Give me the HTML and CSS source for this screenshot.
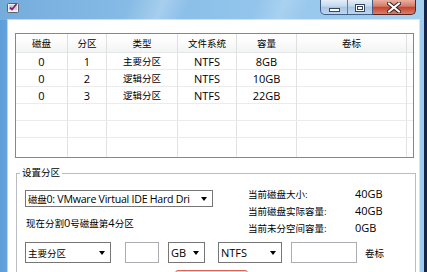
FILE: index.html
```html
<!DOCTYPE html>
<html>
<head>
<meta charset="utf-8">
<link rel="stylesheet" href="styles.css">
</head>
<body>
<div class="window">
  <div class="titlebar">
    <svg class="app-icon" width="12" height="12" viewBox="0 0 12 12">
      <rect x="0.5" y="1.5" width="11" height="9" rx="1" fill="#eef2f6" stroke="#5a6470"/>
      <rect x="2" y="3" width="8" height="5" fill="#c9d3dc"/>
      <path d="M3 5.5 L5 7.5 L9.5 2" fill="none" stroke="#8a1f6a" stroke-width="1.8"/>
    </svg>
    <div class="caption">
      <div class="cap-group">
        <div class="cap-btn cap-min"><span class="glyph-min"></span></div>
        <div class="cap-btn cap-max"><span class="glyph-max"></span></div>
      </div>
      <div class="cap-btn cap-close">
        <svg width="14" height="11" viewBox="0 0 14 11">
          <path d="M2 1.5 L12 9.5 M12 1.5 L2 9.5" stroke="#3a2020" stroke-width="4" stroke-linecap="square"/>
          <path d="M2 1.5 L12 9.5 M12 1.5 L2 9.5" stroke="#ffffff" stroke-width="2" stroke-linecap="square"/>
        </svg>
      </div>
    </div>
  </div>
  <div class="client">
    <div class="listview">
      <div class="lv-row lv-head">
        <div class="c cn">磁盘</div>
        <div class="c cn">分区</div>
        <div class="c cn">类型</div>
        <div class="c cn">文件系统</div>
        <div class="c cn">容量</div>
        <div class="c cn">卷标</div>
        <div class="c"></div>
      </div>
      <div class="lv-row">
        <div class="c">0</div><div class="c">1</div><div class="c cn">主要分区</div><div class="c">NTFS</div><div class="c">8GB</div><div class="c"></div><div class="c"></div>
      </div>
      <div class="lv-row">
        <div class="c">0</div><div class="c">2</div><div class="c cn">逻辑分区</div><div class="c">NTFS</div><div class="c">10GB</div><div class="c"></div><div class="c"></div>
      </div>
      <div class="lv-row">
        <div class="c">0</div><div class="c">3</div><div class="c cn">逻辑分区</div><div class="c">NTFS</div><div class="c">22GB</div><div class="c"></div><div class="c"></div>
      </div>
      <div class="lv-row">
        <div class="c"></div><div class="c"></div><div class="c"></div><div class="c"></div><div class="c"></div><div class="c"></div><div class="c"></div>
      </div>
      <div class="lv-row">
        <div class="c"></div><div class="c"></div><div class="c"></div><div class="c"></div><div class="c"></div><div class="c"></div><div class="c"></div>
      </div>
      <div class="lv-row lv-fill">
        <div class="c"></div><div class="c"></div><div class="c"></div><div class="c"></div><div class="c"></div><div class="c"></div><div class="c"></div>
      </div>
    </div>

    <fieldset class="group">
      <legend class="cn">设置分区</legend>
      <div class="group-body">
        <div class="group-top">
          <div class="left-col">
            <div class="combo combo-disk"><span class="val"><span class="cn">磁盘</span>0: VMware Virtual IDE Hard Dri</span><span class="arrow"></span></div>
            <div class="status"><span class="cn">现在分割</span>0<span class="cn">号磁盘第</span>4<span class="cn">分区</span></div>
          </div>
          <div class="info">
            <div class="lbl cn">当前磁盘大小:</div><div class="num">40GB</div>
            <div class="lbl cn">当前磁盘实际容量:</div><div class="num">40GB</div>
            <div class="lbl cn">当前未分空间容量:</div><div class="num">0GB</div>
          </div>
        </div>
        <div class="group-row">
          <div class="combo combo-type"><span class="val cn">主要分区</span><span class="arrow"></span></div>
          <div class="textbox tb-size"></div>
          <div class="combo combo-unit"><span class="val">GB</span><span class="arrow"></span></div>
          <div class="combo combo-fs"><span class="val">NTFS</span><span class="arrow"></span></div>
          <div class="textbox tb-label"></div>
          <div class="row-label cn">卷标</div>
        </div>
        <div class="actions">
          <div class="btn"></div>
        </div>
      </div>
    </fieldset>
  </div>
</div>
</body>
</html>
```

FILE: styles.css
```css
* { box-sizing: border-box; }

html, body {
  margin: 0;
  padding: 0;
}

body {
  width: 427px;
  height: 272px;
  overflow: hidden;
  background: #16264a;
  font-family: "Open Sans", "Noto Sans CJK SC", sans-serif;
  font-size: 11px;
  color: #000;
}

.cn { font-size: 9.5px; }

.window {
  width: 424px;
  height: 272px;
  display: flex;
  flex-direction: column;
  background: linear-gradient(90deg, #5d9ed9 0%, #6aa7de 3%, #7eb6e4 40%, #8fc2ea 80%, #a2cdee 100%);
}

.titlebar {
  height: 20px;
  display: flex;
  align-items: flex-start;
  justify-content: space-between;
  padding: 0 8px 0 7px;
  background:
    linear-gradient(112deg, rgba(255,255,255,0) 30%, rgba(255,255,255,0.25) 38%, rgba(255,255,255,0) 44%, rgba(255,255,255,0) 60%, rgba(255,255,255,0.18) 66%, rgba(255,255,255,0) 72%),
    linear-gradient(90deg, #74acdc 0%, #86bbe6 30%, #93c5ec 60%, #a6d0f0 100%);
}

.app-icon {
  margin-top: 2px;
  display: block;
}

.caption {
  display: flex;
  height: 15px;
}

.cap-group {
  display: flex;
  border: 1px solid #3f5f86;
  border-top: none;
  border-radius: 0 0 0 5px;
  overflow: hidden;
  background: linear-gradient(180deg, #e4eef8 0%, #c3d8ee 45%, #a9c5e4 50%, #bcd6ef 100%);
}

.cap-btn {
  height: 15px;
  display: flex;
  align-items: center;
  justify-content: center;
}

.cap-min {
  width: 27px;
  border-right: 1px solid #5e7ea6;
}

.cap-max {
  width: 24px;
}

.glyph-min {
  display: block;
  width: 11px;
  height: 4px;
  margin-top: 5px;
  background: #fff;
  border: 1px solid #34465e;
}

.glyph-max {
  display: block;
  width: 10px;
  height: 8px;
  border: 1px solid #34465e;
  background: #fff;
  box-shadow: inset 0 0 0 1px #fff, inset 0 0 0 2px #34465e;
}

.cap-close {
  width: 43px;
  border: 1px solid #5a2320;
  border-top: none;
  border-left: none;
  border-radius: 0 0 5px 0;
  background: linear-gradient(180deg, #eab0a2 0%, #d67a66 45%, #c4452d 52%, #d9806a 100%);
}

.client {
  flex: 1;
  margin: 0 5px 0 8px;
  background: #fff;
  box-shadow: 0 0 0 1px rgba(255,255,255,0.55);
  padding: 13px 0 0 7px;
  overflow: hidden;
}

/* List view */
.listview {
  width: 399px;
  border: 1px solid #828790;
  background: #fff;
}

.lv-row {
  display: grid;
  grid-template-columns: 52px 39px 71px 59px 60px 110px 6px;
  height: 17px;
  border-bottom: 1px solid #ececec;
}

.lv-row .c {
  border-right: 1px solid #e2e2e2;
  display: flex;
  align-items: center;
  justify-content: center;
  line-height: 16px;
  padding-top: 1px;
  white-space: nowrap;
}

.lv-row .c:last-child { border-right: none; }

.lv-head {
  height: 19px;
  border-bottom: 1px solid #e4e6e8;
  background: linear-gradient(180deg, #ffffff 0%, #fbfbfb 50%, #f2f3f4 100%);
}

.lv-head .c {
  border-right-color: #dedfe1;
}

.lv-fill {
  height: 19px;
  border-bottom: none;
}

/* Group box */
.group {
  margin: 8px 0 0 1px;
  padding: 0;
  width: 400px;
  border: 1px solid #b9bdc1;
  min-width: 0;
}

.group legend {
  margin-left: 3px;
  padding: 0 2px;
  line-height: 14px;
}

.group-body {
  padding: 5px 0 0 8px;
}

.group-top {
  display: flex;
}

.left-col {
  width: 188px;
  padding-top: 5px;
}

.combo {
  display: flex;
  align-items: center;
  height: 21px;
  border: 1px solid #767676;
  background: #fff;
  padding-left: 2px;
  white-space: nowrap;
  overflow: hidden;
}

.combo .val {
  flex: 1;
  min-width: 0;
  overflow: hidden;
  text-overflow: clip;
}

.combo .arrow {
  width: 0;
  height: 0;
  border-left: 3.5px solid transparent;
  border-right: 3.5px solid transparent;
  border-top: 4px solid #000;
  margin: 0 5px 0 3px;
  flex: none;
}

.combo-disk {
  width: 188px;
  height: 17px;
  letter-spacing: -0.25px;
  font-size: 10.6px;
}

.status {
  margin-top: 9px;
  line-height: 14px;
  padding-left: 1px;
  white-space: nowrap;
}

.info {
  margin-left: 35px;
  display: grid;
  grid-template-columns: 107px auto;
  grid-auto-rows: 17px;
  align-items: center;
}

.group-row {
  display: flex;
  align-items: center;
  margin-top: 6px;
}

.combo-type { width: 86px; }
.combo-unit { width: 37px; margin-left: 9px; }
.combo-fs { width: 64px; margin-left: 13px; }

.textbox {
  height: 21px;
  border: 1px solid #abadb3;
  background: #fff;
}

.tb-size { width: 34px; margin-left: 14px; }
.tb-label { width: 66px; margin-left: 9px; }

.row-label { margin-left: 8px; }

.actions {
  margin-top: 7px;
  padding-left: 150px;
}

.btn {
  width: 73px;
  height: 22px;
  border: 1px solid #d9625a;
  border-radius: 3px;
  background: linear-gradient(180deg, #fbe3e0, #f3c9c4);
}
```
